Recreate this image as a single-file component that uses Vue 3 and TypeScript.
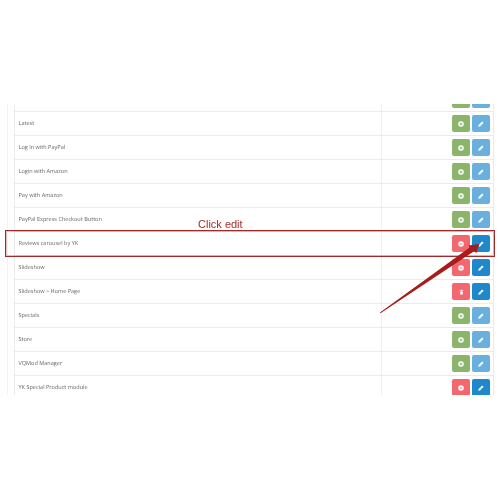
<script setup lang="ts">
type Kind = 'on' | 'off' | 'del'

interface ModuleRow {
  name: string
  kind: Kind
}

const rows: ModuleRow[] = [
  { name: '', kind: 'on' },
  { name: 'Latest', kind: 'on' },
  { name: 'Log In with PayPal', kind: 'on' },
  { name: 'Login with Amazon', kind: 'on' },
  { name: 'Pay with Amazon', kind: 'on' },
  { name: 'PayPal Express Checkout Button', kind: 'on' },
  { name: 'Reviews carousel by YK', kind: 'off' },
  { name: 'Slideshow', kind: 'off' },
  { name: 'Slideshow > Home Page', kind: 'del' },
  { name: 'Specials', kind: 'on' },
  { name: 'Store', kind: 'on' },
  { name: 'VQMod Manager', kind: 'on' },
  { name: 'YK Special Product module', kind: 'off' },
]
</script>

<template>
  <div class="page">
    <div class="frame">
      <div class="table">
        <div v-for="(row, i) in rows" :key="i" class="row">
          <div class="name">{{ row.name }}</div>
          <div class="actions">
            <span class="btn" :class="row.kind === 'on' ? 'btn-green' : 'btn-red'">
              <svg v-if="row.kind === 'del'" width="5" height="6" viewBox="0 0 8 8">
                <path d="M1 1.5h6v1H1zM3 .5h2v1H3zM1.7 3h4.6L6 8H2z" fill="#fff" />
              </svg>
              <svg v-else width="6" height="6" viewBox="0 0 8 8">
                <circle cx="4" cy="4" r="3.7" fill="#fff" />
                <path v-if="row.kind === 'on'" d="M3.4 2h1.2v1.4H6v1.2H4.6V6H3.4V4.6H2V3.4h1.4z" fill="#8cb56c" />
                <path v-else d="M2 3.4h4v1.2H2z" fill="#f2686e" />
              </svg>
            </span>
            <span class="btn" :class="row.kind === 'on' ? 'btn-sky' : 'btn-blue'">
              <svg width="6" height="6" viewBox="0 0 8 8">
                <path d="M5.6.6l1.8 1.8L2.6 7.2.4 7.6l.4-2.2z" fill="#fff" />
              </svg>
            </span>
          </div>
        </div>
      </div>
    </div>

    <div class="highlight"></div>
    <div class="hint">Click edit</div>
    <svg class="arrow" width="500" height="500" viewBox="0 0 500 500">
      <path d="M380 312.6L469.6 247.6L468.6 245.6L479.5 244L476.2 253.2L474.4 251L380.5 313.3Z" fill="#a81c1c" />
    </svg>
  </div>
</template>

<style scoped>
.page {
  position: relative;
  width: 500px;
  height: 500px;
  padding-top: 104px;
  box-sizing: border-box;
  background: #fff;
  overflow: hidden;
  font-family: "Open Sans", "Liberation Sans", sans-serif;
}

.frame {
  height: 291px;
  margin-left: 7px;
  width: 487px;
  box-sizing: border-box;
  padding-left: 6px;
  border-left: 1px solid #f2f2f2;
  overflow: hidden;
  filter: blur(0.3px);
}

.table {
  margin-top: -16px;
  border-left: 1px solid #ebebeb;
  border-right: 1px solid #ebebeb;
}

.row {
  display: grid;
  grid-template-columns: 366px 1fr;
  height: 24px;
  box-sizing: border-box;
  border-bottom: 1px solid #ebebeb;
}

.name {
  padding-left: 3.5px;
  font-size: 5.55px;
  line-height: 23px;
  color: #666;
  text-rendering: geometricPrecision;
}

.actions {
  display: flex;
  justify-content: flex-end;
  align-items: center;
  gap: 2px;
  padding-right: 3px;
  border-left: 1px solid #f0f0f0;
}

.btn {
  display: flex;
  align-items: center;
  justify-content: center;
  width: 18px;
  height: 17px;
  border-radius: 2px;
}

.btn-green { background: #8cb56c; }
.btn-sky { background: #69b0de; }
.btn-red { background: #f2686e; }
.btn-blue { background: #1f88ca; }

.highlight {
  position: absolute;
  left: 5px;
  top: 230px;
  width: 490px;
  height: 27px;
  box-sizing: border-box;
  border: 1px solid #a02a2a;
  box-shadow: inset 0 0 0 1px rgba(170, 50, 50, 0.3);
}

.hint {
  position: absolute;
  left: 198px;
  top: 218px;
  font-family: "Liberation Sans", sans-serif;
  font-size: 11px;
  line-height: 13px;
  color: #a82a2a;
  filter: blur(0.2px);
}

.arrow {
  position: absolute;
  left: 0;
  top: 0;
}
</style>
